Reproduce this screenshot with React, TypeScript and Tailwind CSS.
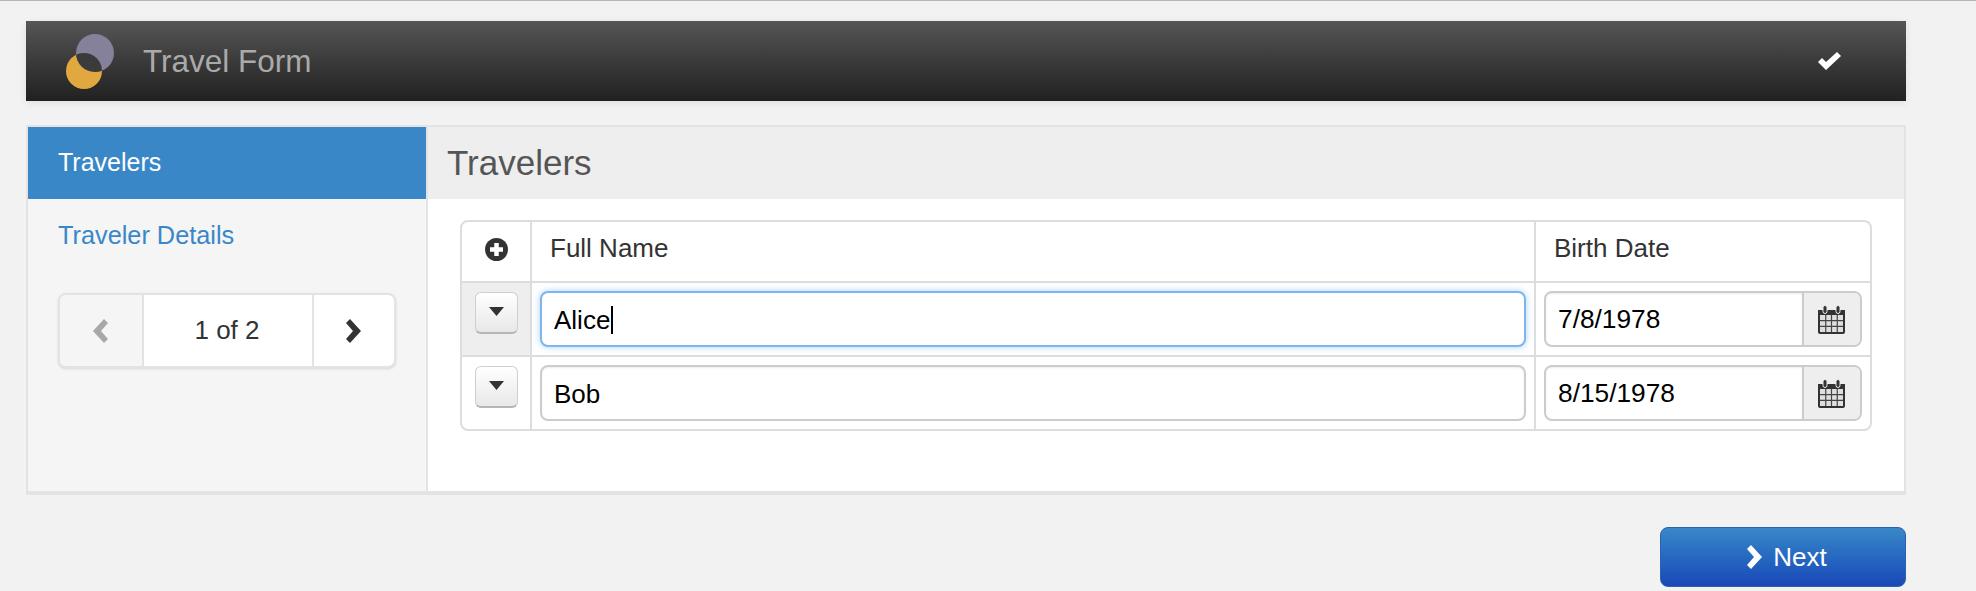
const people = [
  { name: 'Alice', birth: '7/8/1978', selected: true },
  { name: 'Bob', birth: '8/15/1978', selected: false },
];

function Logo() {
  return (
    <svg width="56" height="62" viewBox="0 0 56 62">
      <defs>
        <clipPath id="gold-clip">
          <circle cx="22" cy="41" r="18" />
        </clipPath>
      </defs>
      <circle cx="22" cy="41" r="18" fill="#e2a840" />
      <circle cx="33" cy="23" r="19" fill="#85819b" />
      <circle cx="33" cy="23" r="19" fill="#3c3b3c" clipPath="url(#gold-clip)" />
    </svg>
  );
}

function CheckIcon() {
  return (
    <svg width="23" height="18" viewBox="0 0 23 18">
      <path d="M0 10 L4 6 L8 10 L19 0 L23 4 L8 18 Z" fill="#fff" />
    </svg>
  );
}

function ChevronRightIcon({ className }: { className: string }) {
  return (
    <svg width="15" height="24" viewBox="0 0 15 24" className={className}>
      <path d="M0 4 L4 0 L15 12 L4 24 L0 20 L7 12 Z" fill="currentColor" />
    </svg>
  );
}

function ChevronLeftIcon({ className }: { className: string }) {
  return (
    <svg width="15" height="24" viewBox="0 0 15 24" className={className}>
      <path d="M15 4 L11 0 L0 12 L11 24 L15 20 L8 12 Z" fill="currentColor" />
    </svg>
  );
}

function CalendarIcon() {
  return (
    <svg width="27" height="29" viewBox="0 0 27 29">
      <path d="M0 5 H27 V27 Q27 29 25 29 H2 Q0 29 0 27 Z" fill="#333" />
      <rect x="5" y="0.5" width="4" height="8" rx="2" fill="#333" stroke="#eee" strokeWidth="1" />
      <rect x="18" y="0.5" width="4" height="8" rx="2" fill="#333" stroke="#eee" strokeWidth="1" />
      <rect x="2" y="10" width="23" height="17" fill="#dedede" />
      <path d="M7.75 10 V27 M13.5 10 V27 M19.25 10 V27 M2 15.6 H25 M2 21.3 H25" stroke="#444" strokeWidth="1.2" />
    </svg>
  );
}

function DownCaret() {
  return (
    <svg width="15" height="9" viewBox="0 0 15 9">
      <path d="M0 0 H15 L7.5 9 Z" fill="#333" />
    </svg>
  );
}

function PlusCircle() {
  return (
    <svg width="23" height="23" viewBox="0 0 23 23">
      <circle cx="11.5" cy="11.5" r="11.5" fill="#333" />
      <path d="M11.5 5 V18 M5 11.5 H18" stroke="#fff" strokeWidth="4.5" />
    </svg>
  );
}

export default function App() {
  return (
    <div className="h-[591px] overflow-hidden border-t border-[#b5b5b5] bg-[#f2f2f2] pt-5 pl-[26px] pr-[70px] font-['Liberation_Sans',sans-serif] text-[26px]">
      {/* Header */}
      <div className="flex h-20 items-center bg-gradient-to-b from-[#565656] to-[#212121] pl-[36px] pr-[65px] shadow-[0_2px_8px_rgba(0,0,0,0.08)]">
        <Logo />
        <span className="ml-[25px] pt-[2px] text-[31.5px] text-[#aaaaaa]">Travel Form</span>
        <span className="ml-auto">
          <CheckIcon />
        </span>
      </div>

      {/* Panel */}
      <div className="mt-6 flex h-[370px] border-2 border-b-4 border-[#e3e3e3] bg-white">
        <div className="w-[400px] border-r-2 border-[#e3e3e3] bg-[#f5f5f5]">
          <div className="flex h-[72px] items-center bg-[#3a87c8] pl-[30px] text-[25px] text-white">Travelers</div>
          <div className="flex h-[74px] items-center pl-[30px] text-[25.3px] text-[#3a87c8]">Traveler Details</div>
          <div className="ml-[30px] mt-5 flex h-[75px] w-[338px] overflow-hidden rounded-lg border-2 border-[#e3e3e3] bg-white shadow-sm">
            <div className="flex w-[84px] items-center justify-center border-r-2 border-[#e3e3e3] bg-[#f5f5f5] pr-[2px]">
              <ChevronLeftIcon className="text-[#a8a8a8]" />
            </div>
            <div className="flex flex-1 items-center justify-center pr-[2px] text-[#333]">1 of 2</div>
            <div className="flex w-[82px] items-center justify-center border-l-2 border-[#e3e3e3] pr-[2px]">
              <ChevronRightIcon className="text-[#333]" />
            </div>
          </div>
        </div>

        <div className="flex-1">
          <div className="flex h-[72px] items-center bg-[#eeeeee] pl-[19px] text-[35px] text-[#555555]">Travelers</div>
          <div className="mx-[32px] mt-[21px] grid grid-cols-[70px_1004px_334px] rounded-lg border-2 border-[#dddddd] text-[#000]">
            {/* head row */}
            <div className="flex h-[61px] items-center justify-center border-r-2 border-b-2 border-[#dddddd] pb-[5px]">
              <PlusCircle />
            </div>
            <div className="flex h-[61px] items-center border-r-2 border-b-2 border-[#dddddd] pb-[7px] pl-[18px] text-[#333]">Full Name</div>
            <div className="flex h-[61px] items-center border-b-2 border-[#dddddd] pb-[7px] pl-[18px] text-[#333]">Birth Date</div>

            {people.map((p, i) => {
              const isLast = i === people.length - 1;
              const rowClass = isLast ? 'h-[72px]' : 'h-[74px] border-b-2';
              return (
                <div key={p.name} className="contents">
                  <div className={`flex justify-center border-r-2 border-[#dddddd] pt-[9px] ${rowClass} ${p.selected ? 'bg-[#eeeeee]' : ''}`}>
                    <button className="flex h-[42px] w-[43px] items-center justify-center rounded-md border border-b-2 border-[#cfcfcf] border-b-[#b5b5b5] bg-gradient-to-b from-white to-[#e8e8e8] pb-[2px]">
                      <DownCaret />
                    </button>
                  </div>
                  <div className={`border-r-2 border-[#dddddd] px-[8px] pt-[8px] ${rowClass}`}>
                    {p.selected ? (
                      <div className="flex h-[56px] items-center rounded-lg border-2 border-[#7db6ee] bg-white pl-[12px] pt-[2px] shadow-[0_0_6px_rgba(82,168,236,0.5)]">
                        {p.name}
                        <span className="ml-px h-[28px] w-[2px] bg-black" />
                      </div>
                    ) : (
                      <div className="flex h-[56px] items-center rounded-lg border-2 border-[#cccccc] bg-white pl-[12px] pt-[2px] shadow-[inset_0_1px_2px_rgba(0,0,0,0.08)]">
                        {p.name}
                      </div>
                    )}
                  </div>
                  <div className={`border-[#dddddd] pt-[8px] pl-[8px] pr-[8px] ${rowClass}`}>
                    <div className="flex h-[56px] overflow-hidden rounded-lg border-2 border-[#cccccc] bg-white">
                      <div className="flex flex-1 items-center pl-[12px] pt-[2px] text-[26.3px] shadow-[inset_0_1px_2px_rgba(0,0,0,0.08)]">{p.birth}</div>
                      <div className="flex w-[58px] items-center justify-center border-l-2 border-[#cccccc] bg-[#eeeeee] pr-[2px]">
                        <CalendarIcon />
                      </div>
                    </div>
                  </div>
                </div>
              );
            })}
          </div>
        </div>
      </div>

      {/* Footer */}
      <div className="mt-8 flex justify-end">
        <button className="flex h-[60px] w-[246px] items-center justify-center gap-[11px] rounded-lg border border-[#2a62b0] bg-gradient-to-b from-[#3a87c8] to-[#1a47b8] pl-[8px] text-white">
          <ChevronRightIcon className="text-white" />
          Next
        </button>
      </div>
    </div>
  );
}
